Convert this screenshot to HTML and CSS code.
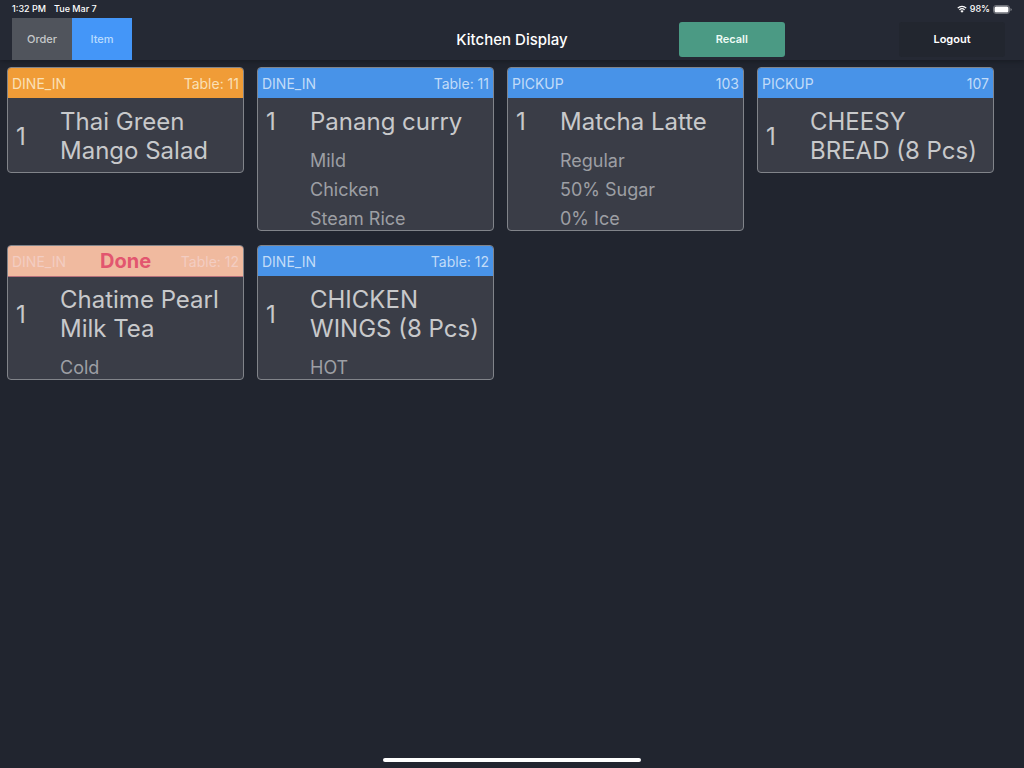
FILE: index.html
```html
<!DOCTYPE html>
<html lang="en">
<head>
<meta charset="utf-8">
<meta name="viewport" content="width=device-width, initial-scale=1">
<title>Kitchen Display</title>
<link rel="stylesheet" href="styles.css">
</head>
<body>
<header class="topbar">
  <div class="status">
    <span class="status-time"><span>1:32 PM</span><span>Tue Mar 7</span></span>
    <span class="status-right">
      <svg class="wifi" viewBox="0 0 20 16" aria-hidden="true">
        <path d="M1.5 6.2a12.3 12.3 0 0 1 17 0M4.8 9.7a7.6 7.6 0 0 1 10.4 0" fill="none" stroke="#fff" stroke-width="2.6"/>
        <path d="M10 15.5l-3.2-3.3a4.6 4.6 0 0 1 6.4 0z" fill="#fff"/>
      </svg>
      <span>98%</span>
      <svg class="battery" viewBox="0 0 38 18" aria-hidden="true">
        <rect x="1" y="1" width="32" height="16" rx="5" fill="none" stroke="#84878d" stroke-width="1.6"/>
        <rect x="3" y="3" width="28" height="12" rx="3" fill="#fff"/>
        <path d="M35 6q2.5 1 2.5 3t-2.5 3z" fill="#84878d"/>
      </svg>
    </span>
  </div>
  <nav class="nav">
    <div class="tabs">
      <button class="tab" type="button">Order</button>
      <button class="tab tab-active" type="button">Item</button>
    </div>
    <h1 class="title">Kitchen Display</h1>
    <div class="actions">
      <button class="action recall" type="button">Recall</button>
      <button class="action logout" type="button">Logout</button>
    </div>
  </nav>
</header>
<main class="board">
  <article class="card">
    <div class="card-head orange"><span>DINE_IN</span><span class="ref">Table: 11</span></div>
    <div class="item"><span class="qty">1</span><h2 class="name">Thai Green Mango Salad</h2></div>
  </article>
  <article class="card">
    <div class="card-head"><span>DINE_IN</span><span class="ref">Table: 11</span></div>
    <div class="item"><span class="qty">1</span><h2 class="name">Panang curry</h2></div>
    <ul class="mods"><li>Mild</li><li>Chicken</li><li>Steam Rice</li></ul>
  </article>
  <article class="card">
    <div class="card-head"><span>PICKUP</span><span class="ref">103</span></div>
    <div class="item"><span class="qty">1</span><h2 class="name">Matcha Latte</h2></div>
    <ul class="mods"><li>Regular</li><li>50% Sugar</li><li>0% Ice</li></ul>
  </article>
  <article class="card">
    <div class="card-head"><span>PICKUP</span><span class="ref">107</span></div>
    <div class="item"><span class="qty">1</span><h2 class="name">CHEESY BREAD (8 Pcs)</h2></div>
  </article>
  <article class="card">
    <div class="card-head done"><span>DINE_IN</span><strong class="done-label">Done</strong><span class="ref">Table: 12</span></div>
    <div class="item"><span class="qty">1</span><h2 class="name">Chatime Pearl Milk Tea</h2></div>
    <ul class="mods"><li>Cold</li></ul>
  </article>
  <article class="card">
    <div class="card-head"><span>DINE_IN</span><span class="ref">Table: 12</span></div>
    <div class="item"><span class="qty">1</span><h2 class="name">CHICKEN WINGS (8 Pcs)</h2></div>
    <ul class="mods"><li>HOT</li></ul>
  </article>
</main>
<footer class="home"><div class="home-bar"></div></footer>
</body>
</html>
```
FILE: styles.css
```css
* { box-sizing: border-box; }
body {
  margin: 0;
  min-height: 100vh;
  display: flex;
  flex-direction: column;
  background: #21252f;
  color: #c8c9cb;
  font-family: Inter, Roboto, sans-serif;
}
h1, h2, ul { margin: 0; padding: 0; font-weight: 400; }
ul { list-style: none; }
button { border: 0; padding: 0; font: inherit; }

.topbar { background: #252934; box-shadow: 0 1px 5px #171a22; }
.status {
  display: flex;
  justify-content: space-between;
  height: 18px;
  padding: 0 12px;
  line-height: 18px;
  font-size: 9px;
  font-weight: 500;
  color: #fff;
}
.status-time { display: flex; gap: 8px; }
.status-right { display: flex; align-items: center; gap: 3px; }
.wifi { width: 10px; height: 8px; }
.battery { width: 19px; height: 9px; }

.nav {
  display: grid;
  grid-template-columns: 1fr auto 1fr;
  align-items: center;
  height: 42px;
}
.tabs { display: flex; padding-left: 12px; }
.tab {
  width: 60px;
  height: 42px;
  background: #50545c;
  color: #c6c8ca;
  font-size: 11px;
  font-weight: 500;
}
.tab-active { background: #4496f8; color: #b9dbff; }
.title { color: #fff; font-size: 15px; font-weight: 500; }
.actions { display: flex; justify-content: space-between; padding: 0 19px 0 111px; }
.action {
  width: 106px;
  height: 35px;
  border-radius: 3px;
  color: #fff;
  font-size: 11px;
  font-weight: 600;
}
.recall { background: #4b9a84; color: #eefaf5; }
.logout { background: #22262f; }

.board {
  flex: 1;
  display: grid;
  grid-template-columns: repeat(4, 1fr);
  align-items: start;
  align-content: start;
  gap: 14px 13px;
  padding: 7px 30px 20px 7px;
}
.card {
  border: 1px solid #81848a;
  border-radius: 4px;
  background: #3a3d47;
  overflow: hidden;
}
.card-head {
  display: flex;
  align-items: center;
  height: 30px;
  padding: 0 4px;
  background: #4893e8;
  color: #c2dcf8;
  font-size: 14px;
}
.card-head span { flex: 1; }
.card-head .ref { text-align: right; }
.orange { background: #f09c37; color: #fae0b6; }
.done { background: #f0ba9f; color: #f3cdc2; box-shadow: 0 1px #b56f7a; }
.done-label { color: #e2566f; font-size: 20px; font-weight: 700; }
.item { display: flex; align-items: center; padding: 9px 4px 7px 8px; }
.qty { flex: 0 0 44px; font-size: 24px; line-height: 29px; }
.name { flex: 1; font-size: 24px; line-height: 29px; }
.mods {
  display: grid;
  gap: 7px;
  padding: 7px 4px 0 52px;
  color: #9d9fa4;
  font-size: 18px;
  line-height: 22px;
}

.home { display: flex; justify-content: center; padding-bottom: 6px; }
.home-bar { width: 258px; height: 4px; border-radius: 2px; background: #fff; }
```
